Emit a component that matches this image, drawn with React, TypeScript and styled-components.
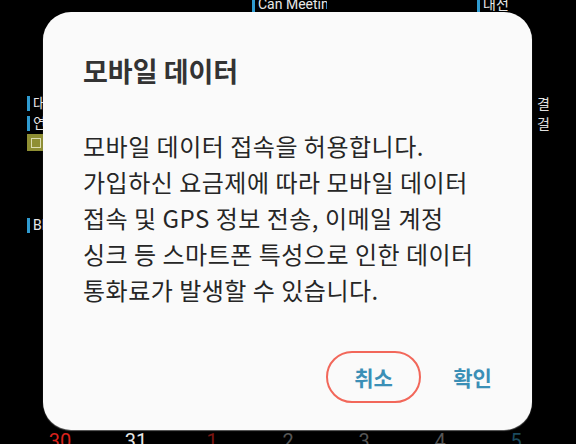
import React from "react";
import styled, { createGlobalStyle } from "styled-components";

const Global = createGlobalStyle`
  html, body { margin: 0; padding: 0; background: #000; }
  body { width: 576px; height: 444px; overflow: hidden; font-family: "Noto Sans CJK KR", "Noto Sans", sans-serif; }
  #root { width: 576px; height: 444px; }
`;

const Screen = styled.div`
  position: relative;
  width: 576px;
  height: 444px;
  background: #000;
  overflow: hidden;
`;

const Calendar = styled.div`
  display: flex;
  flex-direction: column;
  padding-left: 27px;
  width: 525px;
`;

const Week = styled.div<{ $top: number; $h: number }>`
  display: grid;
  grid-template-columns: repeat(7, 75px);
  margin-top: ${(p) => p.$top}px;
  height: ${(p) => p.$h}px;
`;

const Cell = styled.div<{ $pad?: number }>`
  display: flex;
  align-items: center;
  padding-left: ${(p) => p.$pad ?? 0}px;
  overflow: hidden;
  white-space: nowrap;
`;

const Event = styled.div`
  display: flex;
  align-items: center;
  gap: 3px;
  font-family: "Roboto", "Noto Sans CJK KR", sans-serif;
  font-size: 14px;
  color: #e8e8e8;
  line-height: 15px;
  &::before {
    content: "";
    width: 3px;
    height: 15px;
    background: #2f9bd0;
    flex: none;
  }
`;

const Plain = styled.span`
  font-family: "Noto Sans CJK KR", sans-serif;
  font-size: 14px;
  color: #e0e0e0;
  line-height: 15px;
`;

const Sticker = styled.div`
  width: 26px;
  height: 17px;
  background: #8f8f33;
  display: flex;
  align-items: center;
  padding-left: 4px;
  box-sizing: border-box;
  &::after {
    content: "";
    width: 8px;
    height: 8px;
    border: 1.5px solid #dcdcb0;
  }
`;

const DateRow = styled.div<{ $top: number }>`
  display: grid;
  grid-template-columns: repeat(7, 76px);
  padding-left: 22px;
  margin-top: ${(p) => p.$top}px;
`;

const DateNum = styled.div<{ $c: string }>`
  text-align: center;
  font-family: "Roboto", sans-serif;
  font-size: 20px;
  line-height: 24px;
  color: ${(p) => p.$c};
`;

const Dialog = styled.div`
  position: absolute;
  left: 43px;
  top: 12px;
  width: 489px;
  height: 418px;
  box-sizing: border-box;
  background: #fafafa;
  border-radius: 28px;
  box-shadow: 0 1px 1px rgba(120, 120, 120, 0.8);
  display: flex;
  flex-direction: column;
  padding: 40px 12px 27px 40px;
`;

const Title = styled.h1`
  margin: 0;
  font-family: "Noto Sans CJK KR", sans-serif;
  font-size: 27px;
  font-weight: 700;
  line-height: 38px;
  color: #333;
`;

const Body = styled.p`
  margin: 38px 0 0 0;
  font-family: "Noto Sans CJK KR", sans-serif;
  font-size: 24px;
  letter-spacing: 0.5px;
  font-weight: 400;
  line-height: 36px;
  color: #262626;
  white-space: nowrap;
`;

const Actions = styled.div`
  margin-top: auto;
  display: flex;
  justify-content: flex-end;
  gap: 4px;
`;

const Button = styled.button<{ $outlined?: boolean }>`
  width: 95px;
  height: 52px;
  box-sizing: border-box;
  border-radius: 26px;
  border: 2px solid ${(p) => (p.$outlined ? "#f2675a" : "transparent")};
  background: transparent;
  font-family: "Noto Sans CJK KR", sans-serif;
  font-size: 21px;
  font-weight: 700;
  color: #3b8fb6;
  padding: 0;
  cursor: pointer;
`;

export default function App() {
  return (
    <Screen>
      <Global />
      <Calendar>
        <Week $top={-3} $h={15}>
          <Cell />
          <Cell />
          <Cell />
          <Cell>
            <Event>Can Meeting</Event>
          </Cell>
          <Cell />
          <Cell />
          <Cell>
            <Event>대전</Event>
          </Cell>
        </Week>
        <Week $top={83} $h={16}>
          <Cell>
            <Event>대</Event>
          </Cell>
          <Cell />
          <Cell />
          <Cell />
          <Cell />
          <Cell />
          <Cell $pad={60}>
            <Plain>결</Plain>
          </Cell>
        </Week>
        <Week $top={4} $h={16}>
          <Cell>
            <Event>연</Event>
          </Cell>
          <Cell />
          <Cell />
          <Cell />
          <Cell />
          <Cell />
          <Cell $pad={60}>
            <Plain>걸</Plain>
          </Cell>
        </Week>
        <Week $top={3} $h={17}>
          <Cell>
            <Sticker />
          </Cell>
        </Week>
        <Week $top={66} $h={16}>
          <Cell>
            <Event>BE</Event>
          </Cell>
        </Week>
      </Calendar>
      <DateRow $top={196}>
        <DateNum $c="#d9221c">30</DateNum>
        <DateNum $c="#e6e6e6">31</DateNum>
        <DateNum $c="#7a1612">1</DateNum>
        <DateNum $c="#555">2</DateNum>
        <DateNum $c="#555">3</DateNum>
        <DateNum $c="#555">4</DateNum>
        <DateNum $c="#1b4a5e">5</DateNum>
      </DateRow>
      <Dialog>
        <Title>모바일 데이터</Title>
        <Body>
          모바일 데이터 접속을 허용합니다.
          <br />
          가입하신 요금제에 따라 모바일 데이터
          <br />
          접속 및 GPS 정보 전송, 이메일 계정
          <br />
          싱크 등 스마트폰 특성으로 인한 데이터
          <br />
          통화료가 발생할 수 있습니다.
        </Body>
        <Actions>
          <Button $outlined>취소</Button>
          <Button>확인</Button>
        </Actions>
      </Dialog>
    </Screen>
  );
}
